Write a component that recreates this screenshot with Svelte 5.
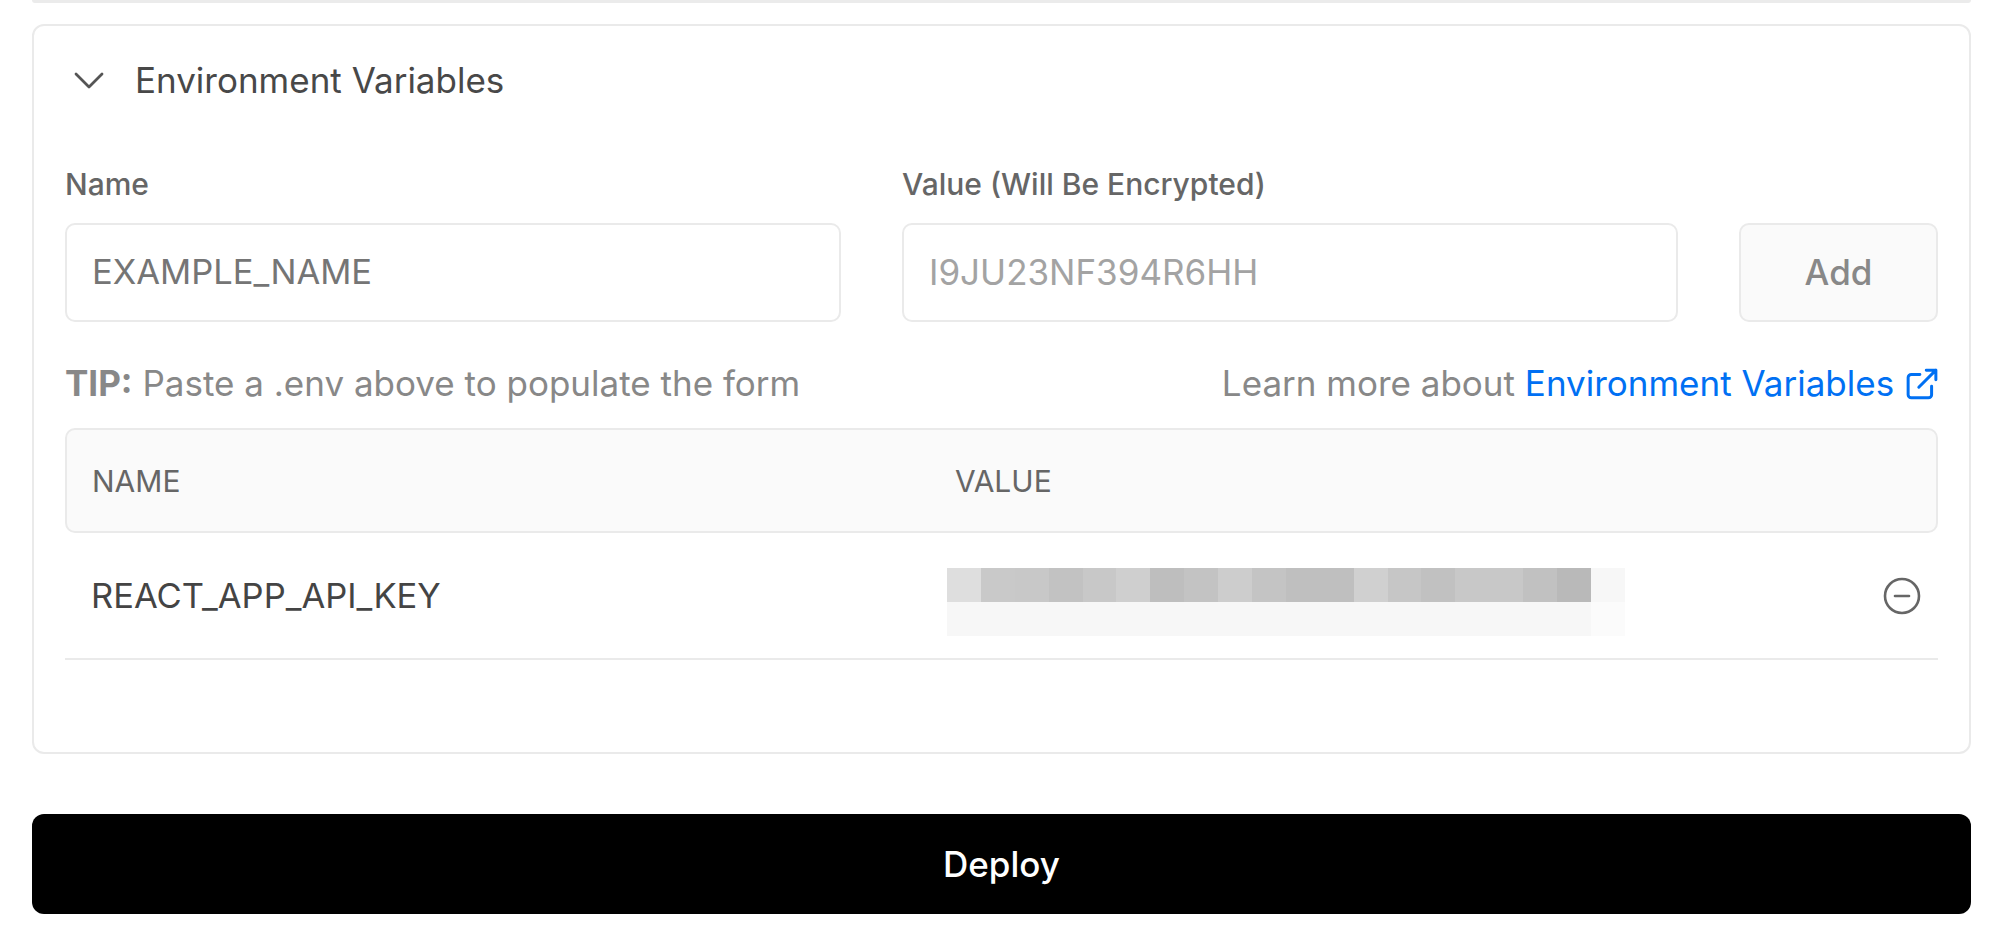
<script>
  const top = ['#dedede','#c9c9c9','#c8c8c8','#c2c2c2','#c8c8c8','#cfcfcf','#bebebe','#c3c3c3','#cdcdcd','#c4c4c4','#bfbfbf','#bfbfbf','#d0d0d0','#c6c6c6','#c1c1c1','#c8c8c8','#c8c8c8','#c1c1c1','#b9b9b9','#f7f7f7'];
  const cells = top.map((c, i) => c);
</script>

<div class="page">
  <div class="prev"></div>
  <section class="card">
    <header class="head">
      <svg class="chev" viewBox="0 0 32 20" width="32" height="20" fill="none" stroke="#555" stroke-width="2.8" stroke-linecap="round" stroke-linejoin="round"><path d="M3 3l13 13L29 3"/></svg>
      <h2>Environment Variables</h2>
    </header>
    <div class="form">
      <label class="field">
        <span>Name</span>
        <input class="dark" placeholder="EXAMPLE_NAME" />
      </label>
      <label class="field">
        <span>Value (Will Be Encrypted)</span>
        <input class="light" placeholder="I9JU23NF394R6HH" />
      </label>
      <button class="add">Add</button>
    </div>
    <div class="tip">
      <p><b>TIP:</b> Paste a .env above to populate the form</p>
      <p>Learn more about <a href="#top">Environment Variables <svg viewBox="0 0 30 30" width="32" height="32" fill="none" stroke="#0070f3" stroke-width="2.8" stroke-linecap="round" stroke-linejoin="round"><path d="M13 6H5a3 3 0 0 0-3 3v16a3 3 0 0 0 3 3h16a3 3 0 0 0 3-3v-8"/><path d="M12 18L28 2M19 2h9v9"/></svg></a></p>
    </div>
    <div class="thead">
      <span class="c1">NAME</span>
      <span class="c2">VALUE</span>
    </div>
    <div class="row">
      <span class="c1">REACT_APP_API_KEY</span>
      <div class="blur">
        {#each cells as c}<i style="background:{c}"></i>{/each}
        {#each cells as c, i}<i class={i === 19 ? 'p2' : 'p1'}></i>{/each}
      </div>
      <svg class="minus" viewBox="0 0 38 38" width="38" height="38" fill="none" stroke="#666" stroke-width="2.6" stroke-linecap="round"><circle cx="19" cy="19" r="17"/><path d="M12 19h14"/></svg>
    </div>
  </section>
  <button class="deploy">Deploy</button>
</div>

<style>
  :global(body) { margin: 0; background: #fff; }
  .page {
    width: 2000px;
    height: 940px;
    box-sizing: border-box;
    padding: 0 29px 0 32px;
    font-family: Inter, "Liberation Sans", sans-serif;
    overflow: hidden;
  }
  .prev {
    height: 3px;
    background: #ebebeb;
    border-radius: 0 0 8px 8px;
    margin-bottom: 21px;
  }
  .card {
    height: 730px;
    box-sizing: border-box;
    border: 2px solid #eaeaea;
    border-radius: 12px;
    padding: 0 31px;
  }
  .head {
    height: 108px;
    display: flex;
    align-items: center;
    margin-bottom: 33px;
  }
  .chev { margin: 2px 30px 0 8px; }
  h2 {
    margin: 0;
    font-size: 35px;
    font-weight: 400;
    color: #484848;
  }
  .form {
    display: grid;
    grid-template-columns: 776px 776px 199px;
    column-gap: 61px;
    align-items: end;
  }
  .field { display: block; }
  .field span {
    display: block;
    height: 34px;
    line-height: 34px;
    margin-bottom: 22px;
    font-size: 30px;
    font-weight: 500;
    color: #666;
  }
  input {
    display: block;
    width: 100%;
    height: 99px;
    box-sizing: border-box;
    border: 2px solid #eaeaea;
    border-radius: 10px;
    padding: 0 25px 2px;
    font: 400 34.5px Inter, sans-serif;
    background: #fff;
    outline: none;
  }
  input.dark::placeholder { color: #757575; opacity: 1; }
  input.light::placeholder { color: #a3a3a3; opacity: 1; }
  input.light { font-size: 35px; }
  .add {
    height: 99px;
    box-sizing: border-box;
    border: 2px solid #eaeaea;
    border-radius: 10px;
    padding: 0 0 2px;
    background: #fafafa;
    color: #888;
    font: 500 35px Inter, sans-serif;
  }
  .tip {
    display: flex;
    justify-content: space-between;
    align-items: center;
    height: 40px;
    margin: 41px 0 25px;
    font-size: 35px;
    color: #888;
  }
  .tip p { margin: 0; }
  .tip b { font-weight: 700; }
  .tip a { color: #0070f3; text-decoration: none; }
  .tip svg { vertical-align: -4px; margin-left: 2px; }
  .thead {
    height: 105px;
    box-sizing: border-box;
    border: 2px solid #eaeaea;
    border-radius: 10px;
    background: #fafafa;
    display: flex;
    align-items: center;
    font-size: 30px;
    color: #666;
  }
  .c1 { width: 888px; box-sizing: border-box; padding-left: 26px; }
  .thead .c1 { padding-left: 25px; }
  .thead .c2 { flex: 1; }
  .row {
    height: 127px;
    box-sizing: border-box;
    border-bottom: 2px solid #eaeaea;
    display: flex;
    align-items: center;
    font-size: 34.5px;
    color: #444;
    position: relative;
  }
  .row .c1 { width: 882px; }
  .blur {
    display: grid;
    grid-template-columns: repeat(20, 33.9px);
    grid-template-rows: 34px 34px;
    margin-top: 12px;
  }
  .blur i { display: block; }
  .p1 { background: #f7f7f7; }
  .p2 { background: #fbfbfb; }
  .minus { margin-left: auto; margin-right: 17px; }
  .deploy {
    display: block;
    width: 100%;
    height: 100px;
    margin-top: 60px;
    border: 0;
    border-radius: 12px;
    background: #000;
    color: #fff;
    font: 500 35px Inter, sans-serif;
  }
</style>
